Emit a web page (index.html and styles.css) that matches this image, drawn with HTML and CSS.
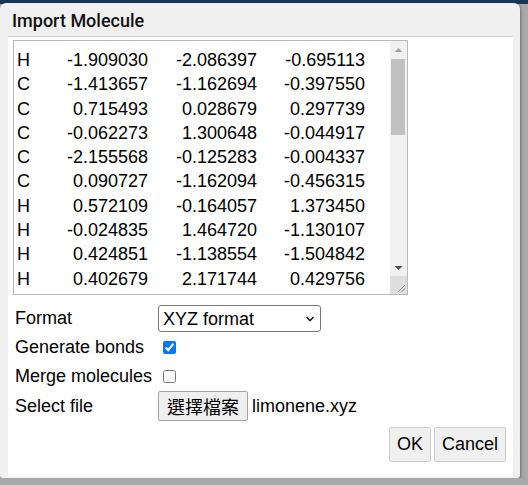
FILE: index.html
```html
<!DOCTYPE html>
<html lang="en">
<head>
<meta charset="utf-8">
<title>Import Molecule</title>
<link rel="stylesheet" href="styles.css">
</head>
<body>
<div class="dialog">
  <div class="titlebar">Import Molecule</div>
  <div class="content">
    <div class="xyz">
      <div class="xyz-rows">
        <span>H</span><span class="n">-1.909030</span><span class="n">-2.086397</span><span class="n">-0.695113</span>
        <span>C</span><span class="n">-1.413657</span><span class="n">-1.162694</span><span class="n">-0.397550</span>
        <span>C</span><span class="n">0.715493</span><span class="n">0.028679</span><span class="n">0.297739</span>
        <span>C</span><span class="n">-0.062273</span><span class="n">1.300648</span><span class="n">-0.044917</span>
        <span>C</span><span class="n">-2.155568</span><span class="n">-0.125283</span><span class="n">-0.004337</span>
        <span>C</span><span class="n">0.090727</span><span class="n">-1.162094</span><span class="n">-0.456315</span>
        <span>H</span><span class="n">0.572109</span><span class="n">-0.164057</span><span class="n">1.373450</span>
        <span>H</span><span class="n">-0.024835</span><span class="n">1.464720</span><span class="n">-1.130107</span>
        <span>H</span><span class="n">0.424851</span><span class="n">-1.138554</span><span class="n">-1.504842</span>
        <span>H</span><span class="n">0.402679</span><span class="n">2.171744</span><span class="n">0.429756</span>
      </div>
      <div class="scrollbar">
        <div class="sb-btn"><svg width="17" height="17" viewBox="0 0 17 17"><polygon points="4.5,11 8.5,7 12.5,11" fill="#a3a3a3"/></svg></div>
        <div class="sb-thumb"></div>
        <div class="sb-track"></div>
        <div class="sb-btn"><svg width="17" height="17" viewBox="0 0 17 17"><polygon points="4.5,7 8.5,11 12.5,7" fill="#505050"/></svg></div>
        <div class="sb-corner"><svg width="17" height="18" viewBox="0 0 17 18"><line x1="8" y1="16" x2="15" y2="9" stroke="#8c8c8c" stroke-width="1"/><line x1="11.5" y1="16" x2="15" y2="12.5" stroke="#8c8c8c" stroke-width="1"/></svg></div>
      </div>
    </div>
    <div class="form">
      <label class="lbl">Format</label>
      <div class="select-wrap">
        <select class="select"><option>XYZ format</option></select>
        <svg class="chev" width="10" height="6" viewBox="0 0 10 6"><polyline points="1.5,1 5,4.5 8.5,1" fill="none" stroke="#222" stroke-width="1.6"/></svg>
      </div>
      <label class="lbl">Generate bonds</label>
      <div class="cell"><input class="check" type="checkbox" checked></div>
      <label class="lbl">Merge molecules</label>
      <div class="cell"><input class="check" type="checkbox"></div>
      <label class="lbl">Select file</label>
      <div class="cell file"><button class="btn file-btn">選擇檔案</button><span class="file-name">limonene.xyz</span></div>
    </div>
    <div class="actions">
      <button class="btn act-btn">OK</button>
      <button class="btn act-btn">Cancel</button>
    </div>
  </div>
</div>
</body>
</html>
```

FILE: styles.css
```css
html {
  background: linear-gradient(to bottom, #17375a 0, #17375a 4px, #a8a8a8 4px);
  height: 100%;
}
body {
  margin: 0;
  overflow: hidden;
  font-family: "Liberation Sans", Arial, "Noto Sans CJK TC", sans-serif;
  font-size: 18px;
  color: #000;
}
.dialog {
  width: 520px;
  height: 475px;
  margin-top: 3px;
  background: #f0f0f0;
  border-radius: 6px 6px 3px 3px;
  box-shadow: 1px 1px 3px rgba(0, 0, 0, 0.35);
  display: flex;
  flex-direction: column;
}
.titlebar {
  height: 33px;
  box-sizing: border-box;
  padding: 2px 0 0 12px;
  display: flex;
  align-items: center;
  font-family: Roboto, "Liberation Sans", sans-serif;
  font-weight: 500;
  font-size: 18px;
  color: #111;
}
.content {
  margin: 0 7px 0 8px;
  background: #fff;
  border-top: 1px solid #d2d2d2;
  height: 431px;
  padding: 3px 7px 6px 5px;
  display: flex;
  flex-direction: column;
}
.xyz {
  width: 395px;
  height: 255px;
  box-sizing: border-box;
  border: 1px solid #b9b9b9;
  display: flex;
  background: #fff;
}
.xyz-rows {
  flex: 1;
  overflow: hidden;
  padding: 7px 0 0 3px;
  display: grid;
  grid-template-columns: 40px 91px 109px 108px;
  grid-auto-rows: 24.3px;
  line-height: 24.3px;
  align-content: start;
  white-space: nowrap;
}
.xyz-rows .n {
  text-align: right;
}
.scrollbar {
  width: 17px;
  display: flex;
  flex-direction: column;
  background: #f1f1f1;
}
.sb-btn {
  height: 17px;
  flex: none;
}
.sb-btn svg, .sb-corner svg {
  display: block;
}
.sb-thumb {
  height: 76px;
  margin: 1px 2px 0 1px;
  background: #c1c1c1;
  flex: none;
}
.sb-track {
  flex: 1;
}
.sb-corner {
  height: 18px;
  flex: none;
  background: #dedede;
}
.form {
  margin-top: 9px;
  padding-left: 2px;
  display: grid;
  grid-template-columns: 143px auto;
  grid-template-rows: 29px 29px 28px 32px;
  align-items: center;
}
.lbl {
  white-space: nowrap;
}
.cell {
  display: flex;
  align-items: center;
}
.select-wrap {
  position: relative;
  width: 163px;
  height: 27px;
}
.select {
  appearance: none;
  -webkit-appearance: none;
  width: 163px;
  height: 27px;
  box-sizing: border-box;
  border: 1px solid #767676;
  border-radius: 3px;
  background: #fff;
  font-family: "Liberation Sans", Arial, sans-serif;
  font-size: 18px;
  color: #000;
  padding: 0 0 0 4px;
  margin: 0;
}
.chev {
  position: absolute;
  right: 6px;
  top: 11px;
  pointer-events: none;
}
.check {
  width: 13px;
  height: 13px;
  margin: 0 0 0 5px;
}
.btn {
  font-family: "Liberation Sans", Arial, "Noto Sans CJK TC", sans-serif;
  font-size: 18px;
  color: #000;
  background: #efefef;
  border-radius: 2px;
  margin: 0;
}
.file-btn {
  height: 30px;
  padding: 0 8px;
  border: 1px solid #a3a3a3;
  font-family: "Noto Sans CJK TC", "Liberation Sans", sans-serif;
  line-height: 1;
}
.file-name {
  margin-left: 4px;
}
.actions {
  margin-top: 5px;
  display: flex;
  justify-content: flex-end;
  gap: 3px;
}
.act-btn {
  height: 35px;
  padding: 0 7px;
  border: 1px solid #cdcdcd;
  background: #f0f0f0;
}
```
